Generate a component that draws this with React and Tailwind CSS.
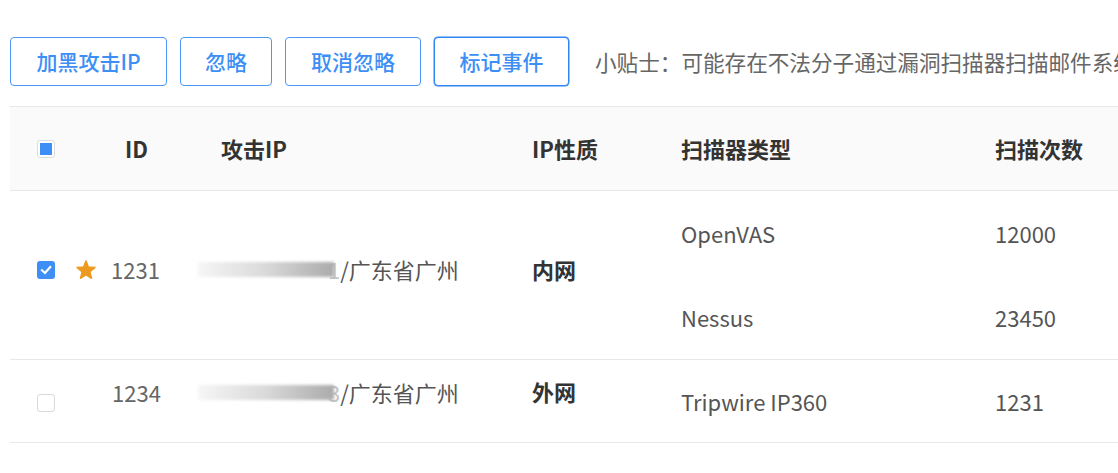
import React from 'react';

const FONT = { fontFamily: '"Noto Sans CJK SC", "Noto Sans", sans-serif' };

const Checkbox = ({ state }) => {
    if (state === 'checked') {
        return (
            <span className="w-[18px] h-[18px] rounded-[3px] bg-[#3d8ff5] flex items-center justify-center">
                <svg width="12" height="12" viewBox="0 0 12 12">
                    <path d="M2 6.2 L5 9 L10.2 3" stroke="#fff" strokeWidth="2.2" fill="none" strokeLinecap="square" />
                </svg>
            </span>
        );
    }
    if (state === 'partial') {
        return (
            <span className="w-[18px] h-[18px] rounded-[3px] border border-[#dcdcdc] bg-white flex items-center justify-center">
                <span className="w-[12px] h-[12px] bg-[#3d8ff5]"></span>
            </span>
        );
    }
    return <span className="w-[18px] h-[18px] rounded-[3px] border border-[#d9d9d9] bg-white"></span>;
};

const Star = () => (
    <svg width="20" height="19" viewBox="0 0 24 23">
        <path
            d="M12 1 L15 8.4 L23 9 L16.9 14.3 L18.8 22.3 L12 18 L5.2 22.3 L7.1 14.3 L1 9 L9 8.4 Z"
            fill="#ec9a1f"
            stroke="#ec9a1f"
            strokeWidth="1.5"
            strokeLinejoin="round"
        />
    </svg>
);

const MaskedIp = ({ tail }) => (
    <div className="flex items-center">
        <div className="w-[136px] h-[15px] blur-[1.5px] bg-gradient-to-r from-[#f6f6f6] via-[#d9d9d9] to-[#ababab]"></div>
        <span className="text-[#c4c4c4] -ml-[6px]">{tail}</span>
        <span className="text-[#555]">/广东省广州</span>
    </div>
);

const buttons = [
    { label: '加黑攻击IP', w: 'w-[157px]' },
    { label: '忽略', w: 'w-[92px]' },
    { label: '取消忽略', w: 'w-[136px]' },
    { label: '标记事件', w: 'w-[135px]' },
];

const COLS = 'grid grid-cols-[60px_128px_334px_149px_314px_1fr]';

export default function App() {
    return (
        <div className="w-[1118px] h-[473px] bg-white overflow-hidden text-[22px]" style={FONT}>
            {/* toolbar */}
            <div className="flex items-center pl-[10px] pt-[37px] whitespace-nowrap">
                <div className="flex gap-[13px] text-[21px]">
                    {buttons.map((b, i) => (
                        <button
                            key={b.label}
                            className={`${b.w} h-[49px] rounded-[4px] border ${i === 3 ? 'border-[#2f86f2] shadow-[0_0_0_0.5px_#2f86f2]' : 'border-[#4a97f5]'} text-[#3d8ff5] font-medium bg-white flex items-center justify-center`}
                        >
                            {b.label}
                        </button>
                    ))}
                </div>
                <div className="ml-[26px] flex-1 min-w-0 overflow-hidden">
                    <span className="text-[#666] text-[21.6px]">小贴士：可能存在不法分子通过漏洞扫描器扫描邮件系统</span>
                </div>
            </div>

            {/* table */}
            <div className="ml-[10px] mt-[20px] border-t border-[#e8e8e8]">
                {/* header */}
                <div className={`${COLS} h-[84px] items-center bg-[#fafafa] border-b border-[#e8e8e8] font-bold text-[#333]`}>
                    <div className="pl-[27px] flex"><Checkbox state="partial" /></div>
                    <div className="pl-[55px]">ID</div>
                    <div className="pl-[23px]">攻击IP</div>
                    <div>IP性质</div>
                    <div>扫描器类型</div>
                    <div className="whitespace-nowrap">扫描次数</div>
                </div>

                {/* row 1 */}
                <div className={`${COLS} items-center border-b border-[#e8e8e8] text-[#555]`}>
                    <div className="pl-[27px] flex -mt-[10px]"><Checkbox state="checked" /></div>
                    <div className="flex items-center pl-[6px] gap-[15px] -mt-[12px]">
                        <Star />
                        <span className="text-[#666]">1231</span>
                    </div>
                    <div className="-mt-[12px]"><MaskedIp tail="1" /></div>
                    <div className="font-bold text-[#333] -mt-[12px]">内网</div>
                    <div className="flex flex-col">
                        <div className="h-[84px] flex items-center">OpenVAS</div>
                        <div className="h-[84px] flex items-center">Nessus</div>
                    </div>
                    <div className="flex flex-col">
                        <div className="h-[84px] flex items-center">12000</div>
                        <div className="h-[84px] flex items-center">23450</div>
                    </div>
                </div>

                {/* row 2 */}
                <div className={`${COLS} h-[83px] items-center border-b border-[#e8e8e8] text-[#555]`}>
                    <div className="pl-[27px] flex mt-[4px]"><Checkbox state="empty" /></div>
                    <div className="pl-[42px] text-[#666] -mt-[18px]">1234</div>
                    <div className="-mt-[18px]"><MaskedIp tail="3" /></div>
                    <div className="font-bold text-[#333] -mt-[20px]">外网</div>
                    <div>Tripwire IP360</div>
                    <div>1231</div>
                </div>
            </div>
        </div>
    );
}
